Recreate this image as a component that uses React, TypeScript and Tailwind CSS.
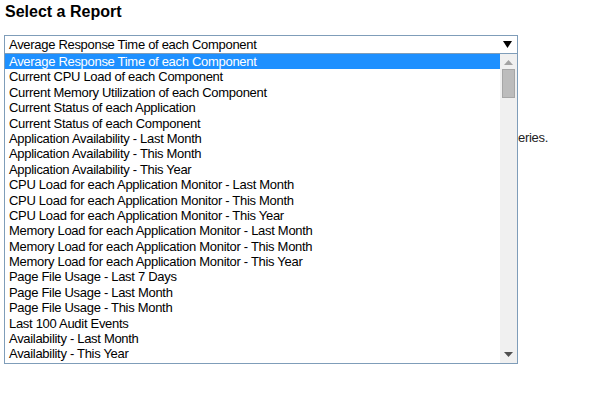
const reports = [
  'Average Response Time of each Component',
  'Current CPU Load of each Component',
  'Current Memory Utilization of each Component',
  'Current Status of each Application',
  'Current Status of each Component',
  'Application Availability - Last Month',
  'Application Availability - This Month',
  'Application Availability - This Year',
  'CPU Load for each Application Monitor - Last Month',
  'CPU Load for each Application Monitor - This Month',
  'CPU Load for each Application Monitor - This Year',
  'Memory Load for each Application Monitor - Last Month',
  'Memory Load for each Application Monitor - This Month',
  'Memory Load for each Application Monitor - This Year',
  'Page File Usage - Last 7 Days',
  'Page File Usage - Last Month',
  'Page File Usage - This Month',
  'Last 100 Audit Events',
  'Availability - Last Month',
  'Availability - This Year',
]

export default function App() {
  return (
    <div className="h-[396px] w-[594px] bg-white text-[#000] font-['Liberation_Sans',Arial,sans-serif]">
      <h2 className="pl-[5px] pt-[2px] text-[16px] font-bold leading-[20px]">Select a Report</h2>

      <div className="relative mt-[13px] ml-[4px] w-[514px]">
        <div className="flex h-[19px] items-center justify-between border border-[#7f9db9] bg-white pl-[4px] pr-[5px] text-[13px] tracking-[-0.3px]">
          <span>{reports[0]}</span>
          <svg width="9" height="7" viewBox="0 0 9 7">
            <path d="M0 0h9L4.5 7z" fill="#000" />
          </svg>
        </div>

        <p className="mt-[76px] pl-[514px] text-[13px] leading-[16px] tracking-[-0.3px] text-[#222]">eries.</p>

        <div className="absolute left-0 top-[19px] flex h-[310px] w-[514px] border border-t-0 border-[#7f9db9] bg-white">
          <ul className="flex-1 text-[13px] tracking-[-0.3px]">
            {reports.map((r, i) => (
              <li
                key={r}
                className={
                  i === 0
                    ? 'h-[15.4px] bg-[#1e90ff] pl-[4px] leading-[15.4px] text-white'
                    : 'h-[15.4px] pl-[4px] leading-[15.4px]'
                }
              >
                {r}
              </li>
            ))}
          </ul>
          <div className="flex w-[17px] flex-col items-center bg-[#f0f0f0]">
            <svg className="mt-[6px]" width="9" height="5" viewBox="0 0 9 5">
              <path d="M0 5h9L4.5 0z" fill="#a3a3a3" />
            </svg>
            <div className="mt-[4px] h-[29px] w-[13px] border border-[#a6a6a6] bg-[#bcbcbc]" />
            <div className="flex-1" />
            <svg className="mb-[6px]" width="9" height="5" viewBox="0 0 9 5">
              <path d="M0 0h9L4.5 5z" fill="#505050" />
            </svg>
          </div>
        </div>
      </div>
    </div>
  )
}
